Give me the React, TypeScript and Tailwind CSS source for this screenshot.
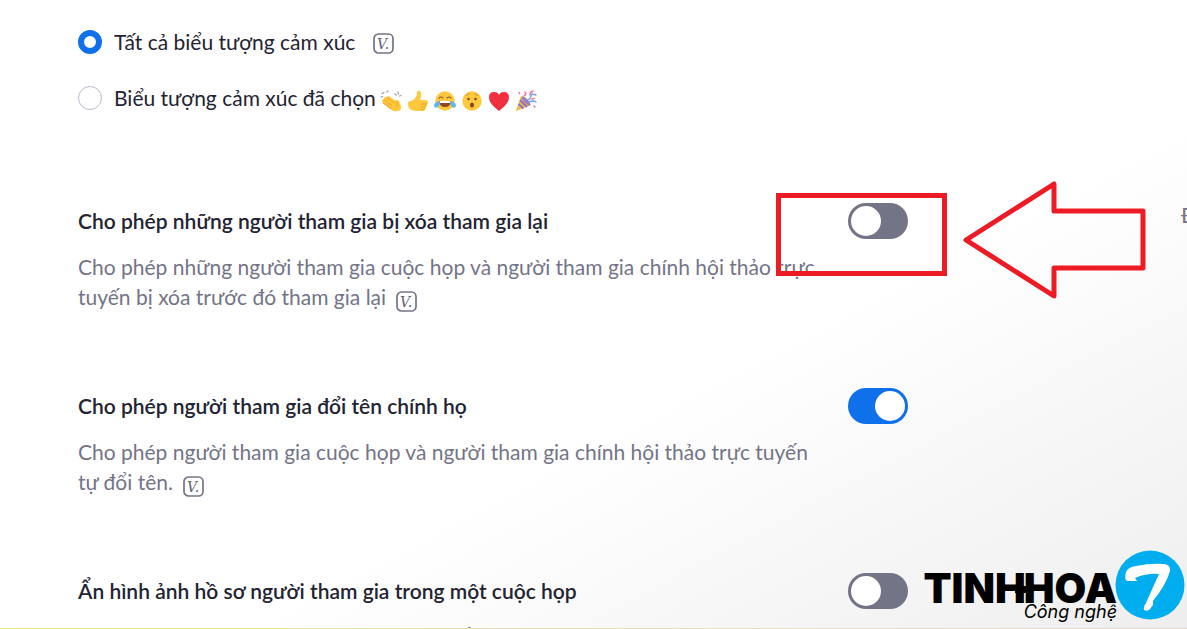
import type { ReactNode } from "react";

function InfoBadge() {
  return (
    <svg viewBox="0 0 21 21" className="block h-[21px] w-[21px]" aria-hidden="true">
      <rect x="1" y="1" width="19" height="19" rx="4.500" fill="none" stroke="#747487" strokeWidth="1.700" />
      <text x="4" y="15.500" fill="#5f5f73" className="font-['DejaVu_Serif',serif] text-[14px] italic">
        V.
      </text>
    </svg>
  );
}

function ClapIcon() {
  return (
    <svg viewBox="0 0 24 24" className="h-6 w-6" aria-hidden="true">
      <path d="M3 4.500l2-1M8 3l1-1M2 8l1.500-.5M16 5l1.500 1M19 3l.5 2M22 6.500l-1.500 .5" stroke="#9a9ba1" strokeWidth="1.200" strokeLinecap="round" />
      <path d="M3 12q0-2 2-2 0-3 3-2 1-2 3 0l6 4q1-2 3 0l2 5q1 5-4 5-3 1-7-2l-6-5q-2-1-2-3" fill="#ffc83d" />
      <path d="M5 10.500l8 6M8 8.500l8 6M4 14l8 5.500" fill="none" stroke="#e99a22" strokeWidth=".8" />
      <path d="M17 12q2 3 1 6" fill="none" stroke="#e99a22" strokeWidth=".8" />
    </svg>
  );
}

function ThumbIcon() {
  return (
    <svg viewBox="0 0 24 24" className="h-6 w-6" aria-hidden="true">
      <path d="M2 14q0-2 3-2 4-1 6-6l0-3q1-2 3-1 2 2 1 6l-1 3h5q3 0 3 2 0 2-1 2 1 2-1 3 0 2-1 2 0 2-3 2h-6q-4 0-6-2-2-1-2-6" fill="#ffc83d" />
      <path d="M21 15h-6M20 18h-5M19 20.500h-4" fill="none" stroke="#e99a22" strokeWidth=".8" />
    </svg>
  );
}

function JoyIcon() {
  return (
    <svg viewBox="0 0 24 24" className="h-6 w-6" aria-hidden="true">
      <circle cx="12" cy="12" r="9.700" fill="#ffc83d" />
      <path d="M6 9q2-2 4 0M14 9q2-2 4 0" fill="none" stroke="#8a5a20" strokeWidth="1.100" strokeLinecap="round" />
      <path d="M6 12h12q-.5 6-6 6t-6-6" fill="#8a4a22" />
      <path d="M6.500 12h11l-.5 2H7z" fill="#fff" />
      <path d="M6 12q-5 1-5 5 1 3 4 1 2-2 1-6M18 12q5 1 5 5-1 3-4 1-2-2-1-6" fill="#5cb8f5" />
    </svg>
  );
}

function WowIcon() {
  return (
    <svg viewBox="0 0 24 24" className="h-6 w-6" aria-hidden="true">
      <circle cx="12" cy="12" r="9.700" fill="#ffc83d" />
      <path d="M6 6.500l3-1.500M15 5l3 1.500" stroke="#c08424" strokeWidth=".8" strokeLinecap="round" />
      <circle cx="8.500" cy="10" r="1.200" fill="#68401d" />
      <circle cx="15.500" cy="10" r="1.200" fill="#68401d" />
      <ellipse cx="12" cy="16" rx="2" ry="2.500" fill="#7d4a20" />
    </svg>
  );
}

function HeartIcon() {
  return (
    <svg viewBox="0 0 24 24" className="h-6 w-6" aria-hidden="true">
      <path d="M12 22Q2 14.500 2 8.500q0-5.500 5-5.500 4 0 5 3 1-3 5-3 5 0 5 5.500 0 6-10 13.500" fill="#f0303f" />
    </svg>
  );
}

function PartyIcon() {
  return (
    <svg viewBox="0 0 24 24" className="h-6 w-6" aria-hidden="true">
      <path d="M2 22L7 7q7 2 10 9z" fill="#f6b83c" />
      <path d="M6 11l7 7M4.500 15l5 4.500" stroke="#8a73cf" strokeWidth="2" />
      <ellipse cx="12" cy="12" rx="2" ry="6" transform="rotate(-43 12 12)" fill="#a07bc0" />
      <path d="M13 11q4-1 4-4t5-1M15 13q4-2 7 0" fill="none" stroke="#6ba4f0" strokeWidth="1.400" strokeLinecap="round" />
      <path d="M10 7q3-2 1-4M16 6q0-3 3-4M5 3.500l.5 1M20 17l1 1M18 10l2-.5" fill="none" stroke="#f0739a" strokeWidth="1.500" strokeLinecap="round" />
    </svg>
  );
}

function Toggle({ id, on = false }: { id: string; on?: boolean }) {
  return (
    <input
      id={id}
      type="checkbox"
      role="switch"
      defaultChecked={on}
      className="h-9 w-[60px] shrink-0 cursor-pointer appearance-none rounded-full bg-[#747487] p-[3px] before:block before:h-[30px] before:w-[30px] before:rounded-full before:bg-white checked:bg-[#0e71eb] checked:before:ml-6"
    />
  );
}

type SettingProps = {
  id: string;
  title: string;
  on?: boolean;
  badge?: boolean;
  status?: string;
  children: ReactNode;
  overlay?: ReactNode;
};

function Setting({ id, title, on, badge = true, status, children, overlay }: SettingProps) {
  return (
    <section className="relative flex items-start">
      <div className="w-[770px] shrink-0">
        <h2 className="font-semibold text-[#232333]">
          <label htmlFor={id}>{title}</label>
        </h2>
        <p className="mt-4 w-[745px] text-[#747487]">
          {children}
          {badge && (
            <span className="ml-2.5 inline-block pt-1 align-middle leading-none">
              <InfoBadge />
            </span>
          )}
        </p>
      </div>
      <div className="-mt-[3px] flex">
        <Toggle id={id} on={on} />
      </div>
      {status && <span className="-mt-1.5 ml-[273px] whitespace-nowrap text-[#747487]">{status}</span>}
      {overlay}
    </section>
  );
}

function Highlight() {
  return (
    <>
      <div className="pointer-events-none absolute -top-[13px] left-[698px] h-[83px] w-[171px] border-5 border-[#ed1c24]" />
      <svg viewBox="0 0 184 118" className="pointer-events-none absolute -top-[25px] left-[885px] h-[118px] w-[184px]" aria-hidden="true">
        <path d="M3 59L91 3v27h89v57H91v28z" fill="none" stroke="#ed1c24" strokeWidth="5" strokeLinejoin="round" />
      </svg>
    </>
  );
}

function Logo() {
  return (
    <div className="absolute right-0.5 bottom-[9px] flex items-start">
      <div className="-mr-0.5 flex flex-col items-end pt-[22px] text-black">
        <span className="font-[Inter,sans-serif] text-[41px] leading-[32px] font-black">
          TINH<span className="-ml-0.5">HOA</span>
        </span>
        <span className="font-[Inter,sans-serif] text-lg leading-[16px] italic">Công nghệ</span>
      </div>
      <svg viewBox="0 0 70 70" className="h-[70px] w-[70px]" aria-hidden="true">
        <circle cx="35" cy="35" r="34.500" fill="#00adef" />
        <path d="M11 22q2-5 10-6 14-3 28-2 7 1 6 7Q51 35 38 51l0 4-3 4q-3 3-6 1-1-3 2-7Q38 37 44 24q-12-1-24 4l2 3-10 0q-3-2-1-9" fill="#fff" />
      </svg>
      <div className="absolute top-[36px] left-[92px] h-[7px] w-3 bg-black" />
    </div>
  );
}

const radioStyle =
  "h-6 w-6 shrink-0 cursor-pointer appearance-none rounded-full border border-[#babacc] bg-white checked:border-6 checked:border-[#0e71eb]";

export default function App() {
  return (
    <main className="relative h-screen overflow-hidden bg-linear-to-br from-white from-60% to-[#eeeeee] pt-[27px] pl-[78px] font-[Lato,sans-serif] text-[21px] leading-[30px] text-[#232333]">
      <fieldset className="flex flex-col gap-[26px]">
        <div className="flex items-center">
          <input id="all" type="radio" name="emoji" defaultChecked className={radioStyle} />
          <label htmlFor="all" className="ml-3">Tất cả biểu tượng cảm xúc</label>
          <span className="ml-[18px] flex pt-0.5"><InfoBadge /></span>
        </div>
        <div className="flex items-center">
          <input id="selected" type="radio" name="emoji" className={radioStyle} />
          <label htmlFor="selected" className="ml-3">Biểu tượng cảm xúc đã chọn</label>
          <span className="ml-[3px] flex gap-[3px] pt-1.5">
            <ClapIcon /><ThumbIcon /><JoyIcon /><WowIcon /><HeartIcon /><PartyIcon />
          </span>
        </div>
      </fieldset>

      <div className="mt-[93px] flex flex-col gap-[79px]">
        <Setting id="rejoin" title="Cho phép những người tham gia bị xóa tham gia lại" status="Đặt lại" overlay={<Highlight />}>
          Cho phép những người tham gia cuộc họp và người tham gia chính hội thảo trực tuyến bị xóa trước đó tham gia lại
        </Setting>
        <Setting id="rename" title="Cho phép người tham gia đổi tên chính họ" on>
          Cho phép người tham gia cuộc họp và người tham gia chính hội thảo trực tuyến tự đổi tên.
        </Setting>
        <Setting id="hide" title="Ẩn hình ảnh hồ sơ người tham gia trong một cuộc họp" badge={false}>
          Tất cả ảnh hồ sơ của người tham gia sẽ bị ẩn trong cuộc họp
        </Setting>
      </div>
      <Logo />
      <div className="absolute inset-x-0 bottom-0 h-px bg-linear-to-r from-[#f0e68c] to-[#e8d5c8]" />
    </main>
  );
}
